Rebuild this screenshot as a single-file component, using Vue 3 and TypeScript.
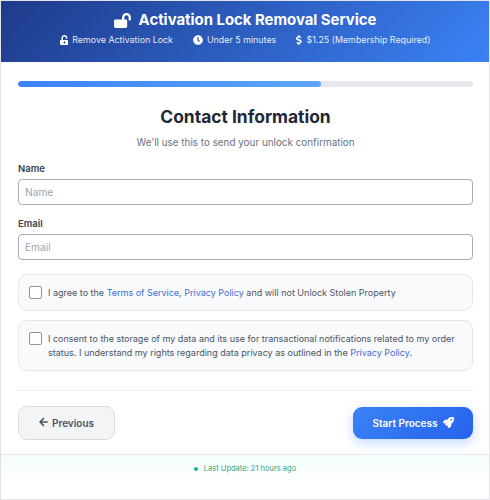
<script setup lang="ts">
const paths = {
  lockOpen: 'M423.5 0C339.5.3 272 69.5 272 153.5V224H48c-26.5 0-48 21.5-48 48v192c0 26.5 21.5 48 48 48h352c26.5 0 48-21.5 48-48V272c0-26.5-21.5-48-48-48h-48v-71.1c0-39.6 31.7-72.5 71.3-72.9 40-.4 72.7 32.1 72.7 72v80c0 13.3 10.7 24 24 24h32c13.3 0 24-10.7 24-24v-80C576 68 507.5-.3 423.5 0z',
  unlockAlt: 'M400 256H152V152.9c0-39.6 31.7-72.5 71.3-72.9 40-.4 72.7 32.1 72.7 72v16c0 13.3 10.7 24 24 24h32c13.3 0 24-10.7 24-24v-16C376 68 307.5-.3 223.5 0 139.5.3 72 69.5 72 153.5V256H48c-26.5 0-48 21.5-48 48v160c0 26.5 21.5 48 48 48h352c26.5 0 48-21.5 48-48V304c0-26.5-21.5-48-48-48zM264 408c0 22.1-17.9 40-40 40s-40-17.9-40-40v-48c0-22.1 17.9-40 40-40s40 17.9 40 40v48z',
  clock: 'M256,8C119,8,8,119,8,256S119,504,256,504,504,393,504,256,393,8,256,8Zm92.49,313h0l-20,25a16,16,0,0,1-22.49,2.5h0l-67-49.72a40,40,0,0,1-15-31.23V112a16,16,0,0,1,16-16h32a16,16,0,0,1,16,16V256l58,42.5A16,16,0,0,1,348.49,321Z',
  dollar: 'M209.2 233.4l-108-31.6C88.7 198.2 80 186.5 80 173.5c0-16.3 13.2-29.5 29.5-29.5h66.3c12.2 0 24.2 3.7 34.2 10.5 6.1 4.1 14.3 3.1 19.5-2l34.8-34c7.1-6.9 6.1-18.4-1.8-24.5C238 74.8 207.4 64.1 176 64V16c0-8.8-7.2-16-16-16h-32c-8.8 0-16 7.2-16 16v48h-2.5C45.8 64-5.4 118.7.5 183.6c4.2 46.1 39.4 83.6 83.8 96.6l102.5 30c12.5 3.7 21.2 15.3 21.2 28.3 0 16.3-13.2 29.5-29.5 29.5h-66.3C100 368 88 364.3 78 357.5c-6.1-4.1-14.3-3.1-19.5 2l-34.8 34c-7.1 6.9-6.1 18.4 1.8 24.5 24.5 19.2 55.1 29.9 86.5 30v48c0 8.8 7.2 16 16 16h32c8.8 0 16-7.2 16-16v-48.2c46.6-.9 90.3-28.6 105.7-72.7 21.5-61.6-14.6-124.8-72.5-141.7z',
  arrow: 'M257.5 445.1l-22.2 22.2c-9.4 9.4-24.6 9.4-33.9 0L7 273c-9.4-9.4-9.4-24.6 0-33.9L201.4 44.7c9.4-9.4 24.6-9.4 33.9 0l22.2 22.2c9.5 9.5 9.3 25-.4 34.3L136.6 216H424c13.3 0 24 10.7 24 24v32c0 13.3-10.7 24-24 24H136.6l120.5 114.8c9.8 9.3 10 24.8.4 34.3z',
  rocket: 'M505.12 19.09c-1.19-5.53-6.66-11-12.21-12.18C460.72 0 435.51 0 410.41 0 307.18 0 245.27 55.2 199.05 128H94.84c-16.35.02-35.56 11.88-42.89 26.48L2.52 253.3A28.4 28.4 0 0 0 0 264a24 24 0 0 0 24 24h103.81l-22.47 22.47c-11.37 11.36-13 32.26 0 45.25l50.9 50.91c11.16 11.19 32.16 13.16 45.28 0L224 384.16V488a24 24 0 0 0 24 24 28.56 28.56 0 0 0 10.71-2.52l98.73-49.39c14.63-7.3 26.5-26.5 26.5-42.86V312.8c72.6-46.31 128.04-108.41 128.04-211.1.09-25.2.09-50.4-6.86-82.61zM384.04 168a40 40 0 1 1 40-40 40 40 0 0 1-40 40z'
}
</script>

<template>
  <div class="card">
    <header class="hero">
      <h1 class="hero-title">
        <svg class="icon-title" viewBox="0 0 576 512"><path :d="paths.lockOpen" /></svg>
        Activation Lock Removal Service
      </h1>
      <div class="hero-meta">
        <span class="meta">
          <svg class="icon-meta" viewBox="0 0 448 512"><path :d="paths.unlockAlt" /></svg>
          Remove Activation Lock
        </span>
        <span class="meta">
          <svg class="icon-meta" viewBox="0 0 512 512"><path :d="paths.clock" /></svg>
          Under 5 minutes
        </span>
        <span class="meta">
          <svg class="icon-meta" viewBox="0 0 320 512"><path :d="paths.dollar" /></svg>
          $1.25 (Membership Required)
        </span>
      </div>
    </header>

    <main class="body">
      <div class="progress"><div class="progress-fill"></div></div>

      <h2 class="heading">Contact Information</h2>
      <p class="sub">We'll use this to send your unlock confirmation</p>

      <div class="field">
        <label class="label" for="name">Name</label>
        <input id="name" class="input" type="text" placeholder="Name" />
      </div>
      <div class="field">
        <label class="label" for="email">Email</label>
        <input id="email" class="input" type="email" placeholder="Email" />
      </div>

      <div class="check-card check-one">
        <span class="box"></span>
        <span class="check-text">I agree to the <a class="link">Terms of Service</a>, <a class="link">Privacy Policy</a> and will not Unlock Stolen Property</span>
      </div>
      <div class="check-card check-two">
        <span class="box"></span>
        <span class="check-text">I consent to the storage of my data and its use for transactional notifications related to my order status. I understand my rights regarding data privacy as outlined in the <a class="link">Privacy Policy</a>.</span>
      </div>

      <div class="actions">
        <button class="btn btn-prev" type="button">
          <svg class="icon-btn" viewBox="0 0 448 512"><path :d="paths.arrow" /></svg>
          Previous
        </button>
        <button class="btn btn-next" type="button">
          Start Process
          <svg class="icon-rocket" viewBox="0 0 512 512"><path :d="paths.rocket" /></svg>
        </button>
      </div>
    </main>

    <footer class="foot">
      <span class="dot"></span>
      Last Update: 21 hours ago
    </footer>
  </div>
</template>

<style scoped>
.card {
  box-sizing: border-box;
  width: 490px;
  height: 500px;
  display: flex;
  flex-direction: column;
  background: #fff;
  border: 1px solid #e2e4e8;
  font-family: Inter, "Liberation Sans", sans-serif;
  color: #1f2937;
  overflow: hidden;
}
.hero {
  height: 61px;
  flex: none;
  background: linear-gradient(135deg, #1e3a8a, #3b82f6);
  color: #fff;
  display: flex;
  flex-direction: column;
  align-items: center;
  padding-top: 10px;
  box-sizing: border-box;
}
.hero-title {
  margin: 0;
  font-size: 14.9px;
  line-height: 19px;
  font-weight: 700;
  display: flex;
  align-items: center;
  gap: 8px;
}
.icon-title { width: 17px; height: 15px; fill: #fff; }
.hero-meta {
  display: flex;
  gap: 20px;
  margin-top: 3px;
  font-size: 8.9px;
  line-height: 14px;
  color: rgba(255, 255, 255, 0.9);
}
.meta { display: flex; align-items: center; gap: 4px; }
.icon-meta { height: 10px; width: auto; fill: #fff; }
.body {
  flex: 1;
  padding: 19px 16px 0 17px;
  display: flex;
  flex-direction: column;
}
.progress { height: 6px; border-radius: 3px; background: #e5e7eb; overflow: hidden; }
.progress-fill {
  width: 66.6%;
  height: 100%;
  border-radius: 3px;
  background: linear-gradient(90deg, #3b82f6, #60a5fa);
}
.heading {
  margin: 19px 0 0;
  text-align: center;
  font-size: 17.4px;
  line-height: 22px;
  font-weight: 700;
  color: #1f2937;
}
.sub {
  margin: 7px 0 0;
  text-align: center;
  font-size: 9.9px;
  line-height: 14px;
  color: #6b7280;
}
.field { margin-top: 14px; display: flex; flex-direction: column; }
.field + .field { margin-top: 13px; }
.label {
  font-size: 9.5px;
  line-height: 12px;
  font-weight: 600;
  color: #374151;
  margin-bottom: 4px;
}
.input {
  box-sizing: border-box;
  width: 100%;
  height: 26px;
  padding: 0 6px;
  border: 1px solid #a8acb3;
  border-radius: 4px;
  font: 400 10.2px Inter, "Liberation Sans", sans-serif;
  background: #fff;
  outline: none;
}
.input::placeholder { color: #9ca3af; }
.check-card {
  display: flex;
  align-items: center;
  gap: 6px;
  padding: 0 10px;
  background: #f8fafc;
  border: 1px solid #e5e7eb;
  border-radius: 9px;
  font-size: 9px;
  line-height: 14px;
  color: #4b5563;
}
.check-one { margin-top: 14px; height: 35px; }
.check-two { margin-top: 9px; height: 51px; align-items: flex-start; padding-top: 11px; box-sizing: border-box; }
.box {
  flex: none;
  box-sizing: border-box;
  width: 13px;
  height: 13px;
  border: 1px solid #8f949c;
  border-radius: 2px;
  background: #fff;
}
.link { color: #3b6fd4; }
.actions {
  margin-top: 19px;
  padding-top: 15px;
  border-top: 1px solid #eceef1;
  display: flex;
  justify-content: space-between;
  align-items: center;
}
.btn {
  box-sizing: border-box;
  display: flex;
  align-items: center;
  justify-content: center;
  font-family: inherit;
  font-size: 10px;
  font-weight: 600;
  border-radius: 9px;
  padding: 0;
}
.btn-prev {
  width: 97px;
  height: 34px;
  gap: 4px;
  background: #f3f4f6;
  color: #4b5563;
  border: 1px solid #d9dce1;
}
.icon-btn { width: 9px; height: 10px; fill: #4b5563; margin-bottom: 2px; }
.btn-next {
  width: 120px;
  height: 32px;
  gap: 5px;
  border: none;
  color: #fff;
  background: linear-gradient(135deg, #3b82f6, #2563eb);
  box-shadow: 0 4px 12px rgba(59, 130, 246, 0.3);
}
.icon-rocket { width: 11px; height: 11px; fill: #fff; margin-bottom: 2px; }
.foot {
  height: 45px;
  flex: none;
  box-sizing: border-box;
  padding-top: 9px;
  border-top: 1px solid #e5e7eb;
  background: linear-gradient(180deg, #f4fdfc, #ffffff 65%);
  display: flex;
  justify-content: center;
  align-items: flex-start;
  gap: 6px;
  font-size: 7.5px;
  line-height: 10px;
  color: #34a57f;
}
.dot {
  width: 4px;
  height: 4px;
  margin-top: 3px;
  border-radius: 50%;
  background: #10b981;
}
</style>
